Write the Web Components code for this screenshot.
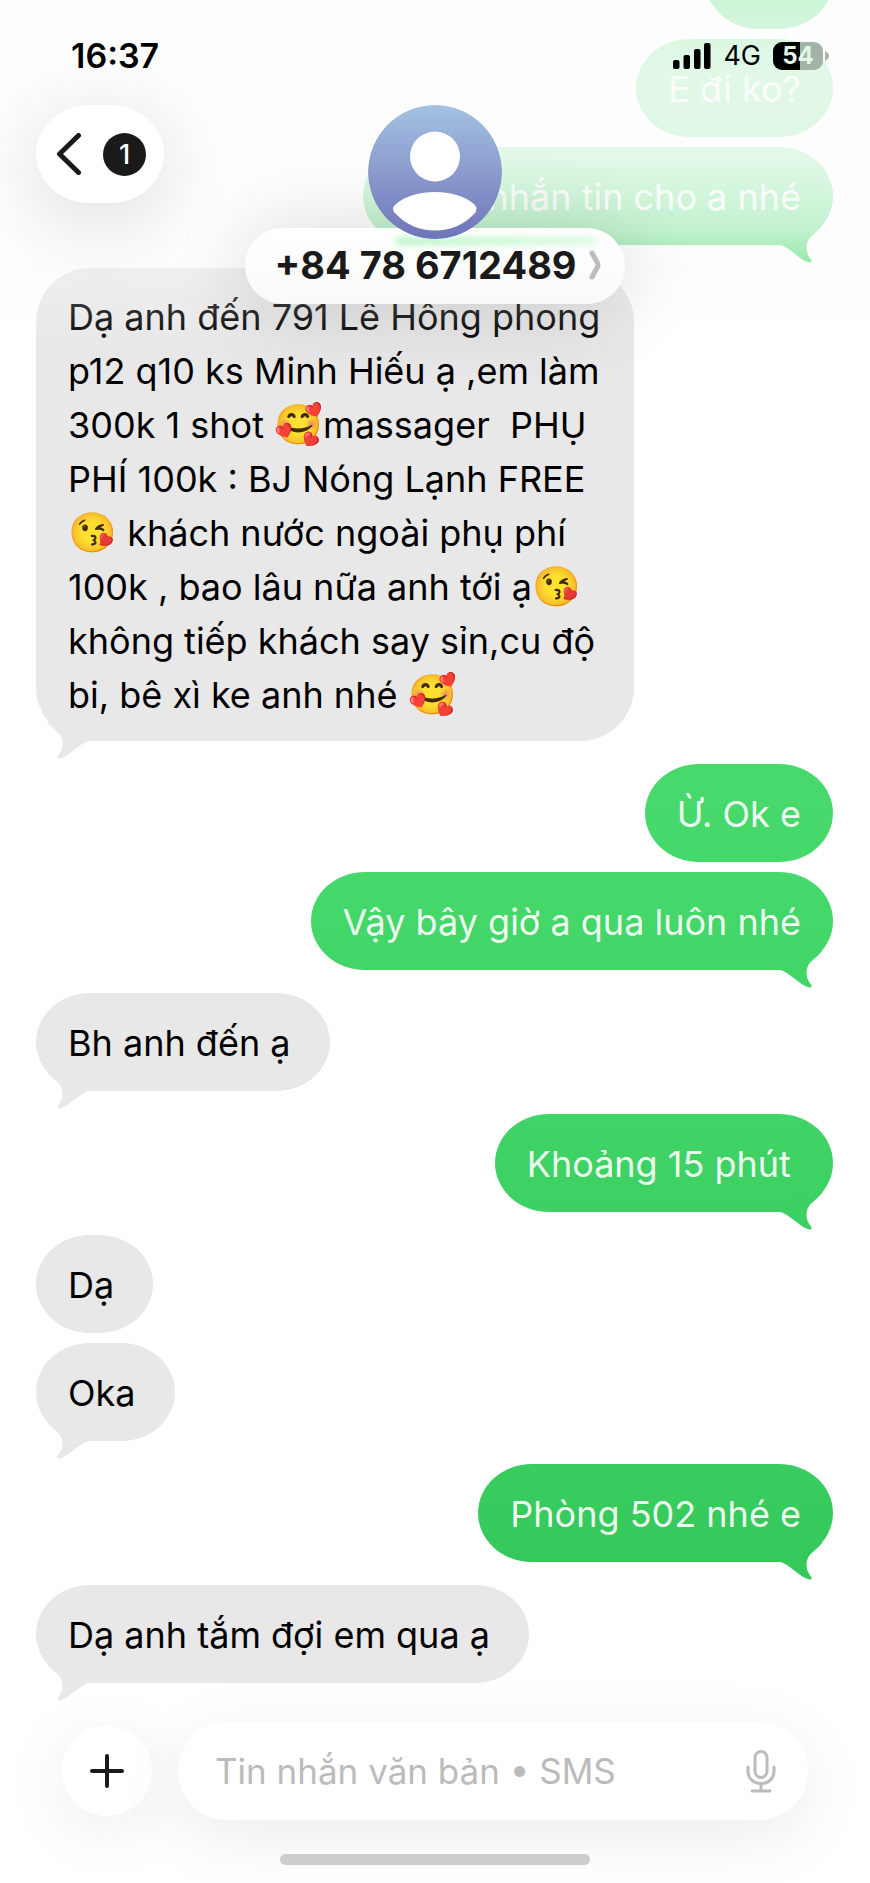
<!DOCTYPE html>
<html lang="vi">
<head>
<meta charset="utf-8">
<meta name="viewport" content="width=device-width, initial-scale=1">
<title>+84 78 6712489</title>
<style>
  html, body { margin: 0; height: 100%; }
  body {
    font-family: Inter, "Noto Sans", "Liberation Sans", sans-serif;
    font-size: 36px;
    line-height: 53px;
    color: #000;
    background: #fff;
  }
  .emoji { font-size: 39px; line-height: 0; }
</style>
</head>
<body>
<chat-screen>
  <status-bar slot="header" time="16:37" network="4G" battery="54"></status-bar>
  <chat-nav slot="header" unread="1">+84 78 6712489</chat-nav>

  <chat-bubble from="me" style="--min: 128px"></chat-bubble>
  <chat-bubble from="me">E đi ko?</chat-bubble>
  <chat-bubble from="me" tail style="--min: 470px">nhắn tin cho a nhé</chat-bubble>
  <chat-bubble from="them" tail long>Dạ anh đến 791 Lê Hồng phong
p12 q10 ks Minh Hiếu ạ ,em làm
300k 1 shot <span class="emoji">🥰</span>massager  PHỤ
PHÍ 100k : BJ Nóng Lạnh FREE
<span class="emoji">😘</span> khách nước ngoài phụ phí
100k , bao lâu nữa anh tới ạ<span class="emoji">😘</span>
không tiếp khách say sỉn,cu độ
bi, bê xì ke anh nhé <span class="emoji">🥰</span></chat-bubble>
  <chat-bubble from="me" style="--top: #48d96d; --end: #45d86a">Ừ. Ok e</chat-bubble>
  <chat-bubble from="me" tail style="--top: #45d86a; --end: #42d567">Vậy bây giờ a qua luôn nhé</chat-bubble>
  <chat-bubble from="them" tail>Bh anh đến ạ</chat-bubble>
  <chat-bubble from="me" tail style="--top: #40d365; --end: #3dd062">Khoảng 15 phút </chat-bubble>
  <chat-bubble from="them">Dạ</chat-bubble>
  <chat-bubble from="them" tail>Oka</chat-bubble>
  <chat-bubble from="me" tail style="--top: #39cc5e; --end: #35c85a">Phòng 502 nhé e</chat-bubble>
  <chat-bubble from="them" tail>Dạ anh tắm đợi em qua ạ</chat-bubble>

  <chat-composer slot="footer" hint="Tin nhắn văn bản • SMS"></chat-composer>
</chat-screen>

<script>
class ChatScreen extends HTMLElement {
  constructor() {
    super();
    this.attachShadow({ mode: 'open' }).innerHTML = `
      <style>
        :host { display: block; position: relative; height: 100%; overflow: hidden; background: #fff; }
        main {
          box-sizing: border-box; height: 100%; padding: 0 37px 200px 36px;
          display: flex; flex-direction: column; justify-content: flex-end;
        }
        header {
          position: absolute; inset: 0 0 auto 0; height: 350px;
          background: linear-gradient(rgba(253,253,253,.72), rgba(253,253,253,.83) 20%, rgba(253,253,253,.83) 44%, rgba(253,253,253,.66) 66%, rgba(250,250,250,.4) 76%, rgba(250,250,250,.12) 92%, rgba(255,255,255,0));
        }
        footer {
          position: absolute; inset: auto 0 0 0;
        }
      </style>
      <main><slot></slot></main>
      <header><slot name="header"></slot></header>
      <footer><slot name="footer"></slot></footer>`;
  }
}

class ChatBubble extends HTMLElement {
  constructor() {
    super();
    this.attachShadow({ mode: 'open' }).innerHTML = `
      <style>
        :host {
          --top: #5fe481; --end: #4cdb70;
          display: block; position: relative; box-sizing: border-box; flex: none;
          align-self: flex-start; margin-bottom: 10px; padding: 24px 39px 21px 32px;
          min-width: var(--min, 0); min-height: 98px; max-width: 75%;
          border-radius: 54px / 49px; background: #e8e8e8;
        }
        :host([tail]) { margin-bottom: 23px; }
        :host(:last-of-type) { margin-bottom: 0; }
        :host([long]) { padding-block: 22px 19px; border-radius: 54px; width: 598px; line-height: 54px; }
        :host([from="me"]) {
          align-self: flex-end; padding-right: 32px; text-align: right; color: rgba(255,255,255,.93);
          background: linear-gradient(var(--top), var(--end));
        }
        .text { white-space: pre; }
        svg { display: none; position: absolute; bottom: -18px; width: 60px; height: 40px; }
        :host([tail]) svg { display: block; }
        :host([from="me"]) svg { right: 0; fill: var(--end); }
        :host([from="them"]) svg { left: 0; transform: scaleX(-1); fill: #e8e8e8; }
      </style>
      <svg viewBox="0 0 60 40" aria-hidden="true"><path d="M6 21.500C17 24 26 37 36 39.500Q40 40 38 36.500C33 31 32 22 36 16C39 12 44 9 49 3L40 0L6 14Z"/></svg>
      <div class="text"><slot></slot></div>`;
  }
}

class StatusBar extends HTMLElement {
  connectedCallback() {
    if (this.shadowRoot) return;
    this.attachShadow({ mode: 'open' }).innerHTML = `
      <style>
        :host {
          display: flex; justify-content: space-between; align-items: center; box-sizing: border-box;
          height: 105px; padding: 6px 41px 0 71px; line-height: 40px;
        }
        .time { font-size: 34px; font-weight: 600; }
        .right { display: flex; align-items: center; gap: 12px; font-size: 27px; }
        .battery { display: flex; align-items: center; gap: 2px; }
        .level {
          width: 50px; height: 28px; border-radius: 9px; text-align: center;
          font-size: 24px; line-height: 28px; font-weight: 700; color: #e2f8e6;
          background: linear-gradient(90deg, #000 54%, #a3b3a7 54%);
        }
        svg { display: block; }
      </style>
      <span class="time">${this.getAttribute('time')}</span>
      <span class="right">
        <svg width="38" height="26" viewBox="0 0 38 26" aria-hidden="true">
          <rect y="17" width="6.500" height="9" rx="2"/><rect x="10.500" y="12" width="6.500" height="14" rx="2"/>
          <rect x="21" y="6" width="6.500" height="20" rx="2"/><rect x="31" width="6.500" height="26" rx="2"/>
        </svg>
        <span>${this.getAttribute('network')}</span>
        <span class="battery"><span class="level">${this.getAttribute('battery')}</span>
          <svg width="4" height="10" viewBox="0 0 4 10" aria-hidden="true"><path d="M0 0Q4 2 4 5T0 10Z" fill="#a9b5ab"/></svg></span>
      </span>`;
  }
}

class ChatNav extends HTMLElement {
  connectedCallback() {
    if (this.shadowRoot) return;
    this.attachShadow({ mode: 'open' }).innerHTML = `
      <style>
        :host { display: grid; grid-template-columns: 1fr auto 1fr; align-items: start; padding: 0 36px; color: #1a1a1a; }
        button { font: inherit; color: inherit; border: 0; background: #fff; cursor: pointer; }
        .back {
          justify-self: start; width: 128px; height: 98px; padding: 0 18px 0 20px;
          display: flex; align-items: center; justify-content: space-between;
          border-radius: 54px / 49px; box-shadow: 0 16px 80px rgba(0,0,0,.14);
        }
        .count {
          width: 43px; height: 43px; border-radius: 50%; background: #1a1a1a; color: #fff;
          font-size: 27px; line-height: 43px; font-weight: 500; text-align: center;
        }
        .contact { display: flex; flex-direction: column; align-items: center; }
        .avatar { position: relative; z-index: 1; display: block; border-radius: 50%; }
        .name {
          display: flex; align-items: center; gap: 12px; height: 76px; margin-top: -11px; padding: 0 24px 2px 29px;
          border-radius: 38px; font-size: 38px; font-weight: 700; white-space: nowrap;
          background: linear-gradient(#fff, #fafafa);
          box-shadow: 0 4px 80px rgba(0,0,0,.16);
          position: relative;
        }
        .name::before {
          content: ""; position: absolute; top: 9px; left: 150px; right: 28px; height: 8px;
          background: linear-gradient(90deg, #b9f5c6, #d9fbe0); filter: blur(3px); border-radius: 4px;
        }
        .name span { position: relative; }
      </style>
      <button class="back" aria-label="Quay lại">
        <svg width="26" height="42" viewBox="0 0 26 42" fill="none" stroke="#1a1a1a" stroke-width="5" stroke-linecap="round" stroke-linejoin="round" aria-hidden="true"><path d="M22.500 2.500L3.500 21L22.500 39.500"/></svg>
        <span class="count">${this.getAttribute('unread')}</span>
      </button>
      <div class="contact">
        <svg class="avatar" width="134" height="134" viewBox="0 0 134 134" aria-hidden="true">
          <defs><linearGradient id="g" x2="0" y2="1"><stop stop-color="#a3c2e2"/><stop offset=".55" stop-color="#8897cb"/><stop offset="1" stop-color="#6f74b9"/></linearGradient></defs>
          <circle cx="67" cy="67" r="67" fill="url(#g)"/>
          <circle cx="67" cy="51.500" r="25" fill="#fff"/>
          <path d="M28 99C46 83 88 83 106 99Q111 104 106 109C86 131 48 131 28 109Q22 104 28 99Z" fill="#fff"/>
        </svg>
        <button class="name"><span><slot></slot></span>
          <svg width="12" height="30" viewBox="0 0 12 30" fill="none" stroke="#bcbcbc" stroke-width="5" stroke-linecap="round" stroke-linejoin="round" aria-hidden="true"><path d="M3 3L8.500 13Q9.500 15 8.500 17L3 27"/></svg>
        </button>
      </div>`;
  }
}

class ChatComposer extends HTMLElement {
  connectedCallback() {
    if (this.shadowRoot) return;
    this.attachShadow({ mode: 'open' }).innerHTML = `
      <style>
        :host { display: block; padding: 0 62px 18px; }
        form { display: flex; align-items: center; gap: 26px; margin: 0; }
        button { border: 0; padding: 0; background: none; display: grid; place-items: center; cursor: pointer; }
        .add { flex: none; width: 90px; height: 90px; border-radius: 50%; background: #fff; box-shadow: 0 12px 70px rgba(0,0,0,.08); }
        .field {
          flex: 1; min-width: 0; height: 98px; box-sizing: border-box; padding: 0 32px 0 37px;
          display: flex; align-items: center; border-radius: 49px; background: #fff;
          box-shadow: 0 16px 70px rgba(0,0,0,.08);
        }
        input { flex: 1; min-width: 0; border: 0; padding: 0; outline: 0; background: none; font: inherit; font-size: 35px; color: #000; }
        input::placeholder { color: #bbb; opacity: 1; }
        .home { width: 310px; height: 11px; margin: 34px auto 0; border-radius: 6px; background: #d2d2d2; }
      </style>
      <form>
        <button class="add" type="button" aria-label="Thêm">
          <svg width="34" height="34" viewBox="0 0 34 34" stroke="#1a1a1a" stroke-width="4" stroke-linecap="round" aria-hidden="true"><path d="M17 2V32M2 17H32"/></svg>
        </button>
        <div class="field">
          <input type="text" aria-label="Tin nhắn" placeholder="${this.getAttribute('hint')}">
          <button type="button" aria-label="Đọc chính tả">
            <svg width="30" height="44" viewBox="0 0 30 44" fill="none" stroke="#bcbcbe" stroke-width="3" stroke-linecap="round" aria-hidden="true"><rect x="9" y="2.500" width="12" height="26" rx="6"/><path d="M2 18V22C2 29 7 34.500 15 34.500S28 29 28 22V18M15 34.500V42M6 42H24"/></svg>
          </button>
        </div>
      </form>
      <div class="home"></div>`;
  }
}

customElements.define('chat-screen', ChatScreen);
customElements.define('chat-bubble', ChatBubble);
customElements.define('status-bar', StatusBar);
customElements.define('chat-nav', ChatNav);
customElements.define('chat-composer', ChatComposer);
</script>
</body>
</html>
